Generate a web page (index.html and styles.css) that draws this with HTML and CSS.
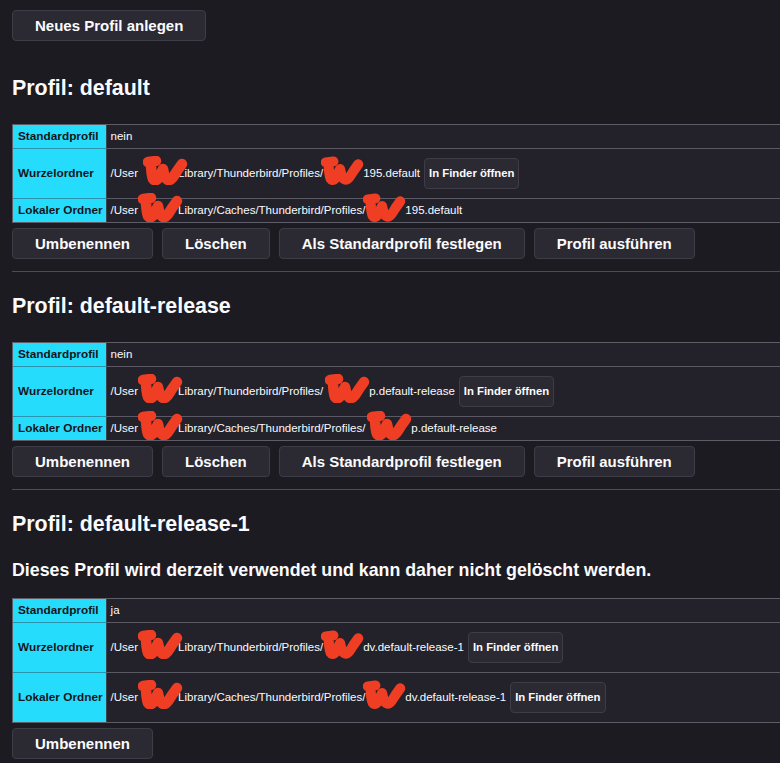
FILE: index.html
```html
<!DOCTYPE html>
<html lang="de">
<head>
<meta charset="utf-8">
<title>Profile</title>
<link rel="stylesheet" href="styles.css">
</head>
<body>
<svg class="defs" width="0" height="0" aria-hidden="true">
  <defs>
    <symbol id="scr" viewBox="0 0 45 29">
      <path d="M5 6 L13 5 M8 6 C8 12 8 18 10 23 C12 26 15 24 17 19 L20 13 C21 18 22 23 25 24 C28 25 31 20 34 15 L39 8" fill="none" stroke="#ef3e24" stroke-width="10.5" stroke-linecap="round" stroke-linejoin="round"/>
    </symbol>
  </defs>
</svg>
<div class="page">
  <div class="top"><button class="btn">Neues Profil anlegen</button></div>

  <section class="profile">
    <h2>Profil: default</h2>
    <table class="info">
      <tr><th>Standardprofil</th><td>nein</td></tr>
      <tr><th>Wurzelordner</th><td><div class="val"><span class="path">/User<span class="redact"><svg class="s1 shift"><use href="#scr"/></svg></span>Library/Thunderbird/Profiles/<span class="redact b"><svg class="s2"><use href="#scr"/></svg></span>195.default</span><button class="small">In Finder öffnen</button></div></td></tr>
      <tr><th>Lokaler Ordner</th><td><span class="path">/User<span class="redact"><svg class="s1"><use href="#scr"/></svg></span>Library/Caches/Thunderbird/Profiles/<span class="redact b"><svg class="s2"><use href="#scr"/></svg></span>195.default</span></td></tr>
    </table>
    <div class="actions">
      <button class="btn">Umbenennen</button>
      <button class="btn">Löschen</button>
      <button class="btn">Als Standardprofil festlegen</button>
      <button class="btn">Profil ausführen</button>
    </div>
  </section>

  <div class="sep"></div>

  <section class="profile">
    <h2>Profil: default-release</h2>
    <table class="info">
      <tr><th>Standardprofil</th><td>nein</td></tr>
      <tr><th>Wurzelordner</th><td><div class="val"><span class="path">/User<span class="redact"><svg class="s1"><use href="#scr"/></svg></span>Library/Thunderbird/Profiles/<span class="redact wide"><svg class="s2"><use href="#scr"/></svg></span>p.default-release</span><button class="small">In Finder öffnen</button></div></td></tr>
      <tr><th>Lokaler Ordner</th><td><span class="path">/User<span class="redact"><svg class="s1"><use href="#scr"/></svg></span>Library/Caches/Thunderbird/Profiles/<span class="redact wide"><svg class="s2"><use href="#scr"/></svg></span>p.default-release</span></td></tr>
    </table>
    <div class="actions">
      <button class="btn">Umbenennen</button>
      <button class="btn">Löschen</button>
      <button class="btn">Als Standardprofil festlegen</button>
      <button class="btn">Profil ausführen</button>
    </div>
  </section>

  <div class="sep"></div>

  <section class="profile">
    <h2>Profil: default-release-1</h2>
    <p class="notice">Dieses Profil wird derzeit verwendet und kann daher nicht gelöscht werden.</p>
    <table class="info">
      <tr><th>Standardprofil</th><td>ja</td></tr>
      <tr><th>Wurzelordner</th><td><div class="val"><span class="path">/User<span class="redact"><svg class="s1"><use href="#scr"/></svg></span>Library/Thunderbird/Profiles/<span class="redact b"><svg class="s2"><use href="#scr"/></svg></span>dv.default-release-1</span><button class="small">In Finder öffnen</button></div></td></tr>
      <tr><th>Lokaler Ordner</th><td><div class="val"><span class="path">/User<span class="redact"><svg class="s1"><use href="#scr"/></svg></span>Library/Caches/Thunderbird/Profiles/<span class="redact b"><svg class="s2"><use href="#scr"/></svg></span>dv.default-release-1</span><button class="small">In Finder öffnen</button></div></td></tr>
    </table>
    <div class="actions">
      <button class="btn">Umbenennen</button>
    </div>
  </section>
</div>
</body>
</html>
```
FILE: styles.css
```css
html {
  overflow: hidden;
  background: #1c1b22;
}
body {
  margin: 0;
  padding: 10px 0 0 12px;
  background: #1c1b22;
  color: #fbfbfe;
  font-family: "Liberation Sans", Arial, sans-serif;
  overflow: hidden;
}
.defs {
  position: absolute;
  width: 0;
  height: 0;
}
.page {
  width: 900px;
}
.top {
  display: flex;
  margin-bottom: 35px;
}
.btn {
  font: bold 15px/19px "Liberation Sans", Arial, sans-serif;
  color: #fbfbfe;
  background: #2b2a33;
  border: 1px solid #3e3d47;
  border-radius: 4px;
  padding: 5px 22px;
  margin: 0;
}
h2 {
  font: bold 21.4px/25px "Liberation Sans", Arial, sans-serif;
  margin: 0 0 23px;
  color: #fbfbfe;
}
.notice {
  font: bold 17.8px/21px "Liberation Sans", Arial, sans-serif;
  margin: 0 0 17px;
}
.info {
  width: 100%;
  border-collapse: separate;
  border-spacing: 0;
  border: 1px solid #5e5d67;
  border-right: 0;
  font-size: 11.5px;
  line-height: 13px;
}
.info th {
  background: #26dcfc;
  color: #15141a;
  font: bold 11.8px/13px "Liberation Sans", Arial, sans-serif;
  text-align: left;
  white-space: nowrap;
  width: 84px;
  padding: 5px 3px 5px 5px;
  border-right: 1px solid #3b4550;
  border-bottom: 1px solid #2a93ad;
}
.info td {
  background: #23222b;
  padding: 5px 4px;
  white-space: nowrap;
  border-bottom: 1px solid #5b5a64;
  vertical-align: middle;
}
.info tr:last-child th,
.info tr:last-child td {
  border-bottom: 0;
}
.val {
  display: flex;
  align-items: center;
}
.path {
  white-space: nowrap;
  line-height: 13px;
}
.redact {
  display: inline-block;
  position: relative;
  width: 40px;
  height: 0;
}
.redact.b {
  width: 40px;
}
.redact.wide {
  width: 46px;
}
.redact svg {
  position: absolute;
  top: -21px;
  height: 29px;
  overflow: visible;
}
.redact svg.s1 {
  left: 0;
  width: 45px;
}
.redact svg.s1.shift {
  left: 5px;
}
.redact svg.s2 {
  left: -2px;
  width: 43px;
}
.redact.wide svg.s2 {
  left: 2px;
  width: 45px;
}
.small {
  font: bold 11.3px/13px "Liberation Sans", Arial, sans-serif;
  color: #fbfbfe;
  background: #2b2a33;
  border: 1px solid #3e3d47;
  border-radius: 4px;
  padding: 8px 4px;
  margin: 4px 0 4px 4px;
  white-space: nowrap;
}
.actions {
  display: flex;
  gap: 9px;
  margin-top: 5px;
}
.sep {
  height: 0;
  border-top: 1px solid #4e4d56;
  margin: 12px 0 22px;
}
```
